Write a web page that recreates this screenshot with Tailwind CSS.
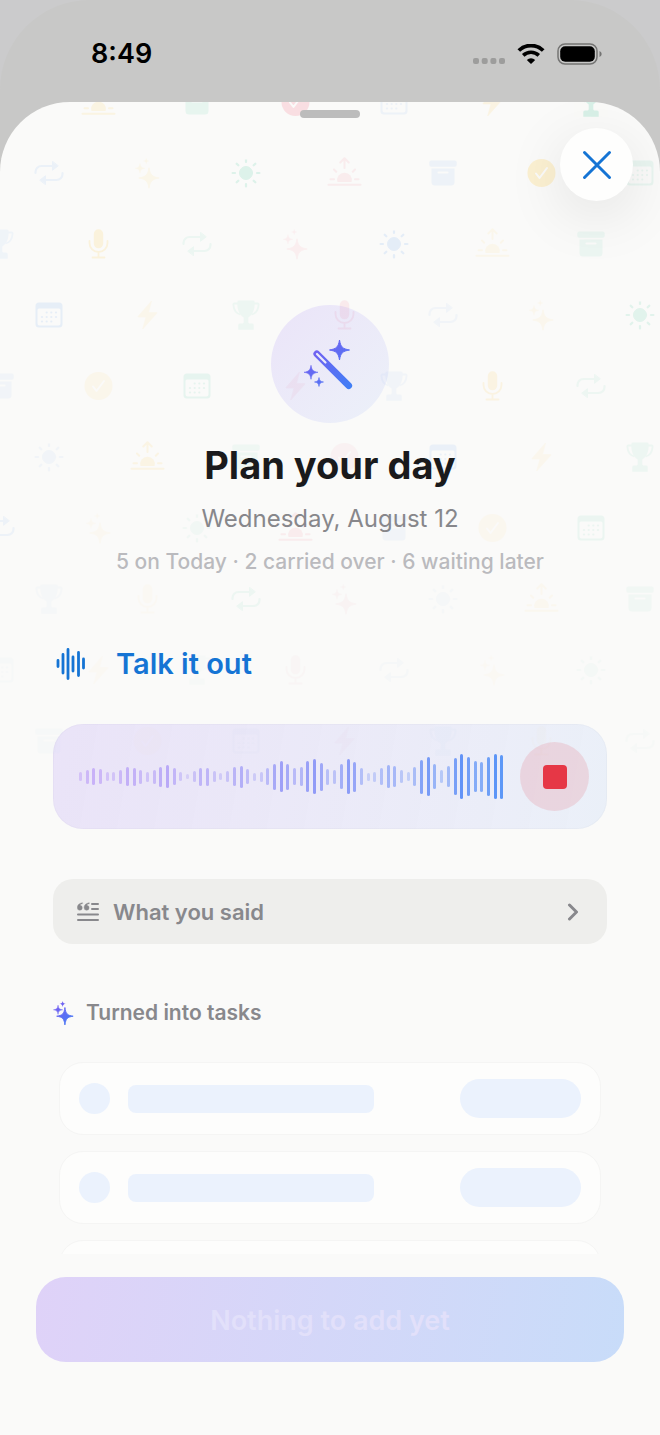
<!DOCTYPE html>
<html lang="en">
<head>
    <meta charset="UTF-8">
    <meta name="viewport" content="width=device-width, initial-scale=1.0">
    <title>Plan your day</title>
    <script src="https://cdn.jsdelivr.net/npm/@tailwindcss/browser@4"></script>
</head>
<body class="h-screen overflow-hidden bg-[#cbcbcc] font-['Inter','Liberation_Sans',sans-serif]">
    <!-- Icon shapes, all drawn around 0,0 -->
    <svg class="absolute size-0" aria-hidden="true">
        <defs>
            <g id="star"><path d="M0-10C1.2-3 3-1.2 10 0C3 1.2 1.2 3 0 10C-1.2 3-3 1.2-10 0C-3-1.2-1.2-3 0-10Z" fill="currentColor" stroke="currentColor" stroke-width="0.8" stroke-linejoin="round"/></g>
            <g id="repeat" fill="none" stroke="currentColor" stroke-width="2.2" stroke-linecap="round">
                <path d="M-13.5 0v-1a6 6 0 0 1 6-6H3M13.5 0v1a6 6 0 0 1-6 6H-3"/>
                <path d="M3.5-11.3v8.600L9-7ZM-3.500 11.300V2.700L-9 7Z" fill="currentColor" stroke-width="1" stroke-linejoin="round"/>
            </g>
            <g id="sparkles">
                <use href="#star" transform="translate(1.5 5) scale(1.02)"/>
                <use href="#star" transform="translate(-7.5 -4.7) scale(.48)"/>
                <use href="#star" transform="translate(-1.3 -12) scale(.28)"/>
            </g>
            <g id="sun" stroke="currentColor" stroke-width="2.2" stroke-linecap="round">
                <circle r="6.5" fill="currentColor" stroke-width="1"/>
                <path d="M0-13.3v-.1V-11M0 13.400V11M-13.400 0H-11M13.400 0H11M-9.300-9.300l1.600 1.600M9.300-9.300l-1.600 1.600M-9.300 9.300l1.600-1.600M9.300 9.300l-1.600-1.600"/>
            </g>
            <g id="sunrise" fill="none" stroke="currentColor" stroke-width="2" stroke-linecap="round" stroke-linejoin="round">
                <path d="M-16 11.7h32M-14 6.3h3.500M14 6.300h-3.500M-10.500-3.500l2.200 2.200M10.500-3.500l-2.200 2.200M0-5v-9.500M-4.200-10.500L0-14.700l4.200 4.200"/>
                <path d="M-7 9a7.300 7.300 0 1 1 14 0Z" fill="currentColor" stroke="none"/>
            </g>
            <g id="archive">
                <rect x="-13.7" y="-12.5" width="27.4" height="6.3" rx="2" fill="currentColor"/>
                <path d="M-11.5-4.5h23v13.5a3.500 3.500 0 0 1-3.500 3.500h-16a3.500 3.500 0 0 1-3.500-3.500ZM-4.500-1.600a1 1 0 0 0 0 2.200h9a1 1 0 0 0 0-2.200Z" fill="currentColor" fill-rule="evenodd"/>
            </g>
            <g id="check">
                <circle r="14" fill="currentColor"/>
                <path d="M-5.500.5l3.500 4.500L5.500-5" fill="none" stroke="#fafaf9" stroke-width="2" stroke-linecap="round" stroke-linejoin="round"/>
            </g>
            <g id="calendar">
                <path d="M-10-12.500h20a3.500 3.500 0 0 1 3.500 3.500v18a3.500 3.500 0 0 1-3.500 3.500h-20a3.500 3.500 0 0 1-3.500-3.500v-18a3.500 3.500 0 0 1 3.500-3.500ZM-10-6.500a1.500 1.500 0 0 0-1.500 1.500v13.500a2 2 0 0 0 2 2h19a2 2 0 0 0 2-2v-13.500a1.500 1.500 0 0 0-1.500-1.500Z" fill="currentColor" fill-rule="evenodd"/>
                <path d="M-2.300-2.500h0M2.300-2.500h0M7-2.500h0M-7 2h0M-2.300 2h0M2.300 2h0M7 2h0M-7 6.500h0M-2.300 6.500h0M2.300 6.500h0" fill="none" stroke="currentColor" stroke-width="2.2" stroke-linecap="round"/>
            </g>
            <g id="bolt"><path d="M4-14L-9.500 1.500Q-9.500 2-9 2H-1.500L-4.800 14L9.500-2Q9.500-2.500 9-2.500H1Z" fill="currentColor" stroke="currentColor" stroke-width="0.6" stroke-linejoin="round"/></g>
            <g id="trophy">
                <path d="M-7-14.500h14q1.700 0 1.700 1.700C8.700-5 7-1 2.300 2.500v4.700q0 1 1 1.200h2.700q1.700 0 1.700 1.700v4.600h-15.400v-4.600q0-1.700 1.700-1.700h2.700q1-.2 1-1.200v-4.700C-7-1-8.700-5-8.700-12.800q0-1.700 1.700-1.700Z" fill="currentColor"/>
                <path d="M-8-11.500h-3.500q-1.200 0-1.100 1.200C-12.200-4.500-9.500-1.500-5.500-.5M8-11.500h3.500q1.200 0 1.100 1.200C12.200-4.500 9.500-1.500 5.500-.5" fill="none" stroke="currentColor" stroke-width="1.8"/>
            </g>
            <g id="mic" fill="none" stroke="currentColor" stroke-width="1.8" stroke-linecap="round">
                <rect x="-4.7" y="-14.7" width="9.4" height="19" rx="4.7" fill="currentColor" stroke="none"/>
                <path d="M-9-3v2a9 9 0 0 0 18 0v-2M0 8v5.500M-6 13.500h12"/>
            </g>
            <linearGradient id="violet-blue" gradientUnits="userSpaceOnUse" x1="0" y1="0" x2="52" y2="52">
                <stop offset="0" stop-color="#8158f0"/>
                <stop offset="1" stop-color="#3b82f6"/>
            </linearGradient>
        </defs>
    </svg>

    <div class="flex h-full flex-col rounded-t-[90px] bg-[#c8c8c7]">
        <!-- Status bar -->
        <header class="flex h-[102px] shrink-0 items-center justify-between pt-2 pr-[58px] pb-[3px] pl-[91px]">
            <time class="text-[27px] leading-8 font-semibold text-black">8:49</time>
            <div class="flex items-center gap-3">
                <svg class="mt-3.5 h-1.5 w-8" viewBox="0 0 32 6" fill="#9d9d9c" aria-hidden="true">
                    <rect width="6" height="6" rx="2"/><rect x="8.7" width="6" height="6" rx="2"/><rect x="17.4" width="6" height="6" rx="2"/><rect x="26" width="6" height="6" rx="2"/>
                </svg>
                <svg class="h-5 w-7" viewBox="0 0 28 20" aria-hidden="true">
                    <path d="M1.800 6.500a17.500 17.500 0 0 1 24.400 0" fill="none" stroke="#000" stroke-width="3.8"/>
                    <path d="M6.200 11.400a11.300 11.300 0 0 1 15.600 0" fill="none" stroke="#000" stroke-width="3.6"/>
                    <path d="M9.800 16a6.200 6.200 0 0 1 8.400 0L14 20Z"/>
                </svg>
                <svg class="h-[22px] w-[45px]" viewBox="0 0 45 22" aria-hidden="true">
                    <rect x="1" y="1" width="39" height="20" rx="7" fill="none" stroke="#747473" stroke-width="1.5"/>
                    <rect x="3.2" y="3.2" width="34.6" height="15.6" rx="5"/>
                    <path d="M42.500 8q2.200 1 2.200 3t-2.200 3Z" fill="#747473"/>
                </svg>
            </div>
        </header>

        <!-- Sheet -->
        <main class="relative flex min-h-0 flex-1 flex-col overflow-hidden rounded-t-[70px] bg-[#fafaf9]">
            <svg id="pattern" class="pointer-events-none absolute top-0 left-0 h-[700px] w-full" aria-hidden="true"></svg>
            <div class="absolute top-2 left-1/2 h-2 w-[60px] -translate-x-1/2 rounded-full bg-[#bcbcbc]"></div>
            <button type="button" aria-label="Close" class="absolute top-[26px] right-[27px] z-10 grid size-[73px] place-items-center rounded-full bg-[#fefefd] shadow-[0_14px_60px_rgba(0,0,0,0.1)]">
                <svg class="size-[30px]" viewBox="0 0 30 30" fill="none" stroke="#1574d4" stroke-width="3" stroke-linecap="round" aria-hidden="true"><path d="M2.500 2.500l25 25M27.500 2.500l-25 25"/></svg>
            </button>

            <div class="relative min-h-0 flex-1 overflow-hidden px-[53px] pt-[203px]">
                <section class="flex flex-col items-center text-center">
                    <div class="grid size-[118px] place-items-center rounded-full bg-linear-to-br from-[#8b5cf6]/14 to-[#3b82f6]/8">
                        <svg class="size-[52px]" viewBox="0 0 52 52" aria-hidden="true">
                            <g fill="url(#violet-blue)">
                                <path d="M35.500 2C36.700 9 38.500 10.800 45.500 12C38.500 13.200 36.700 15 35.500 22C34.300 15 32.500 13.200 25.500 12C32.500 10.800 34.300 9 35.500 2Z" stroke="url(#violet-blue)"/>
                                <path d="M7 27.300C7.800 32.200 9.100 33.500 14 34.300C9.100 35.100 7.800 36.400 7 41.300C6.200 36.400 4.900 35.100 0 34.300C4.900 33.500 6.200 32.200 7 27.300Z" stroke="url(#violet-blue)" stroke-width=".6"/>
                                <path d="M15 39.500C15.600 42.600 16.400 43.400 19.500 44C16.400 44.600 15.600 45.400 15 48.500C14.400 45.400 13.600 44.600 10.500 44C13.600 43.400 14.400 42.600 15 39.500Z" stroke="url(#violet-blue)" stroke-width=".6"/>
                            </g>
                            <path d="M12.800 15.800L44.700 47.700" stroke="url(#violet-blue)" stroke-width="6.8" stroke-linecap="round"/>
                            <path d="M13 16L21.500 24.500" stroke="#eceafa" stroke-width="2.2" stroke-linecap="round"/>
                        </svg>
                    </div>
                    <h1 class="mt-[18px] text-[38px] leading-12 font-bold text-[#1a1a1c]">Plan your day</h1>
                    <p class="mt-3.5 text-[24px] leading-8 text-[#87878b]">Wednesday, August 12</p>
                    <p class="mt-[13px] text-[21px] leading-7 font-medium text-[#bababe]">5 on Today · 2 carried over · 6 waiting later</p>
                </section>

                <button type="button" class="mt-[68px] flex items-center gap-[30px] pl-[3px] text-[#1574d4]">
                    <svg class="h-8 w-[30px]" viewBox="0 0 30 32" fill="none" stroke="currentColor" stroke-width="2.8" stroke-linecap="round" aria-hidden="true"><path d="M2 12.500v6M7 6.500v18.500M12 1.500v29M17 9v14M22.500 4.500v23M27.500 11v9"/></svg>
                    <span class="text-[29px] leading-10 font-semibold">Talk it out</span>
                </button>

                <div class="mt-10 flex h-[105px] items-center gap-4 rounded-[30px] border border-black/2 bg-linear-100 from-[#8b5cf6]/14 to-[#3b82f6]/8 bg-origin-border pr-[17px] pl-[25px]">
                    <div id="waveform" class="flex h-12 flex-1 items-center justify-between"></div>
                    <button type="button" aria-label="Stop recording" class="grid size-[69px] place-items-center rounded-full bg-[#e63946]/14">
                        <span class="size-6 rounded-[4px] bg-[#e63746]"></span>
                    </button>
                </div>

                <button type="button" class="mt-[50px] flex h-[65px] w-full items-center rounded-[20px] bg-[#eeeeec] pr-7 pl-6 text-[#88888c]">
                    <svg class="h-5 w-[22px]" viewBox="0 0 22 20" fill="none" stroke="currentColor" stroke-width="2" stroke-linecap="round" aria-hidden="true">
                        <path d="M15 2h6M15 7h6M1 12.500h20M1 18h20"/>
                        <path d="M5.200.8C1.800 1.400.3 3.200.3 5.800a2.500 2.500 0 1 0 2.700-2.500C3.200 2.500 4 1.900 5.300 1.700ZM12 .8C8.600 1.400 7.100 3.200 7.100 5.800a2.500 2.500 0 1 0 2.700-2.500C10 2.500 10.800 1.900 12.100 1.700Z" fill="currentColor" stroke-width=".4"/>
                    </svg>
                    <span class="ml-3.5 text-[22px] leading-8 font-semibold">What you said</span>
                    <svg class="ml-auto h-[18px] w-3" viewBox="0 0 12 18" fill="none" stroke="currentColor" stroke-width="3" stroke-linecap="round" stroke-linejoin="round" aria-hidden="true"><path d="M2.500 2l7 7-7 7"/></svg>
                </button>

                <section>
                    <h2 class="mt-[53px] flex items-center gap-[11px] text-[21px] leading-8 font-semibold text-[#88888c]">
                        <svg class="h-6 w-[22px]" viewBox="0 0 48 52" fill="url(#violet-blue)" aria-hidden="true">
                            <path d="M26 14C28 28 31 31 44 33C31 35 28 38 26 52C24 38 21 35 8 33C21 31 24 28 26 14Z" stroke="url(#violet-blue)" stroke-width="2"/>
                            <path d="M11 9C12 16 14 18 21 19C14 20 12 22 11 29C10 22 8 20 1 19C8 18 10 16 11 9Z" stroke="url(#violet-blue)"/>
                            <path d="M21 0C22 4 23 5 28 6C23 7 22 8 21 13C20 8 19 7 14 6C19 5 20 4 21 0Z"/>
                        </svg>
                        Turned into tasks
                    </h2>
                    <ul class="mt-[33px] flex flex-col gap-4 px-1.5">
                        <li class="flex h-[73px] shrink-0 items-center rounded-[24px] border border-[#f5f5f4] bg-[#fdfdfc] px-[19px]">
                            <span class="size-[31px] rounded-full bg-[#ebf2fd]"></span>
                            <span class="ml-[18px] h-7 w-[246px] rounded-lg bg-[#ebf2fd]"></span>
                            <span class="ml-auto h-[39px] w-[121px] rounded-full bg-[#ebf2fd]"></span>
                        </li>
                        <li class="flex h-[73px] shrink-0 items-center rounded-[24px] border border-[#f5f5f4] bg-[#fdfdfc] px-[19px]">
                            <span class="size-[31px] rounded-full bg-[#ebf2fd]"></span>
                            <span class="ml-[18px] h-7 w-[246px] rounded-lg bg-[#ebf2fd]"></span>
                            <span class="ml-auto h-[39px] w-[121px] rounded-full bg-[#ebf2fd]"></span>
                        </li>
                        <li class="flex h-[73px] shrink-0 items-center rounded-[24px] border border-[#f5f5f4] bg-[#fdfdfc] px-[19px]">
                            <span class="size-[31px] rounded-full bg-[#ebf2fd]"></span>
                            <span class="ml-[18px] h-7 w-[246px] rounded-lg bg-[#ebf2fd]"></span>
                            <span class="ml-auto h-[39px] w-[121px] rounded-full bg-[#ebf2fd]"></span>
                        </li>
                    </ul>
                </section>
            </div>

            <footer class="relative px-9 pt-[23px] pb-[73px]">
                <button type="button" disabled class="h-[85px] w-full rounded-[30px] bg-linear-100 from-[#dfd2f8] to-[#c8dcf9] pt-1 text-[27px] font-semibold text-[#e2e0fa]">Nothing to add yet</button>
            </footer>
        </main>
    </div>

    <script>
        // Background pattern: the icons cycle, each row starts 2 steps back
        const icons = ['repeat', 'sparkles', 'sun', 'sunrise', 'archive', 'check', 'calendar', 'bolt', 'trophy', 'mic'];
        const colors = ['#2f80ed', '#ffbf1f', '#10b981', '#f43f5e'];
        const alphas = [
            [.06, .10, .08, .14, .06, .10, .14],
            [.07, .07, .12, .07, .06, .18, .07],
            [.05, .13, .06, .06, .10, .06, .06],
            [.09, .06, .05, .08, .04, .05, .10],
            [.04, .06, .08, .05, .04, .10, .05],
            [.04, .09, .04, .04, .07, .05, .05],
            [.06, .03, .03, .07, .04, .04, .06],
            [.02, .02, .05, .03, .02, .04, .03],
            [.01, .02, .01, .02, .02, .02, .02],
            [.01, .01, .01, .02, .01, .01, .01]
        ];
        const pattern = document.getElementById('pattern');
        alphas.forEach((row, r) => {
            const start = (32 - r * 2) % 10;
            row.forEach((alpha, c) => {
                const x = c * 98.5 + (r % 2 ? 49 : 0);
                const y = r * 71;
                pattern.insertAdjacentHTML('beforeend',
                    `<g transform="translate(${x} ${y})" color="${colors[c % 4]}" opacity="${alpha}"><use href="#${icons[(start + c) % 10]}"/></g>`);
            });
        });

        // Microphone levels, oldest first
        const levels = [9, 14, 17, 15, 9, 9, 14, 19, 18, 14, 10, 14, 20, 23, 17, 9, 5, 11, 18, 18, 11, 7, 11, 19, 22, 15, 8, 10, 17, 26, 31, 26,
            17, 19, 31, 35, 28, 16, 14, 25, 35, 30, 17, 8, 10, 17, 23, 21, 13, 9, 19, 34, 39, 25, 13, 21, 37, 45, 39, 31, 30, 39, 45, 44];
        const mix = (a, b, t) => Math.round(a + (b - a) * t);
        document.getElementById('waveform').innerHTML = levels.map((level, i) => {
            const t = i / (levels.length - 1);
            const color = `rgba(${mix(150, 59, t)}, ${mix(96, 130, t)}, 246, ${0.12 + 0.7 * level / 45})`;
            return `<span class="w-[3px] rounded-full" style="height: ${level}px; background-color: ${color}"></span>`;
        }).join('');
    </script>
</body>
</html>
